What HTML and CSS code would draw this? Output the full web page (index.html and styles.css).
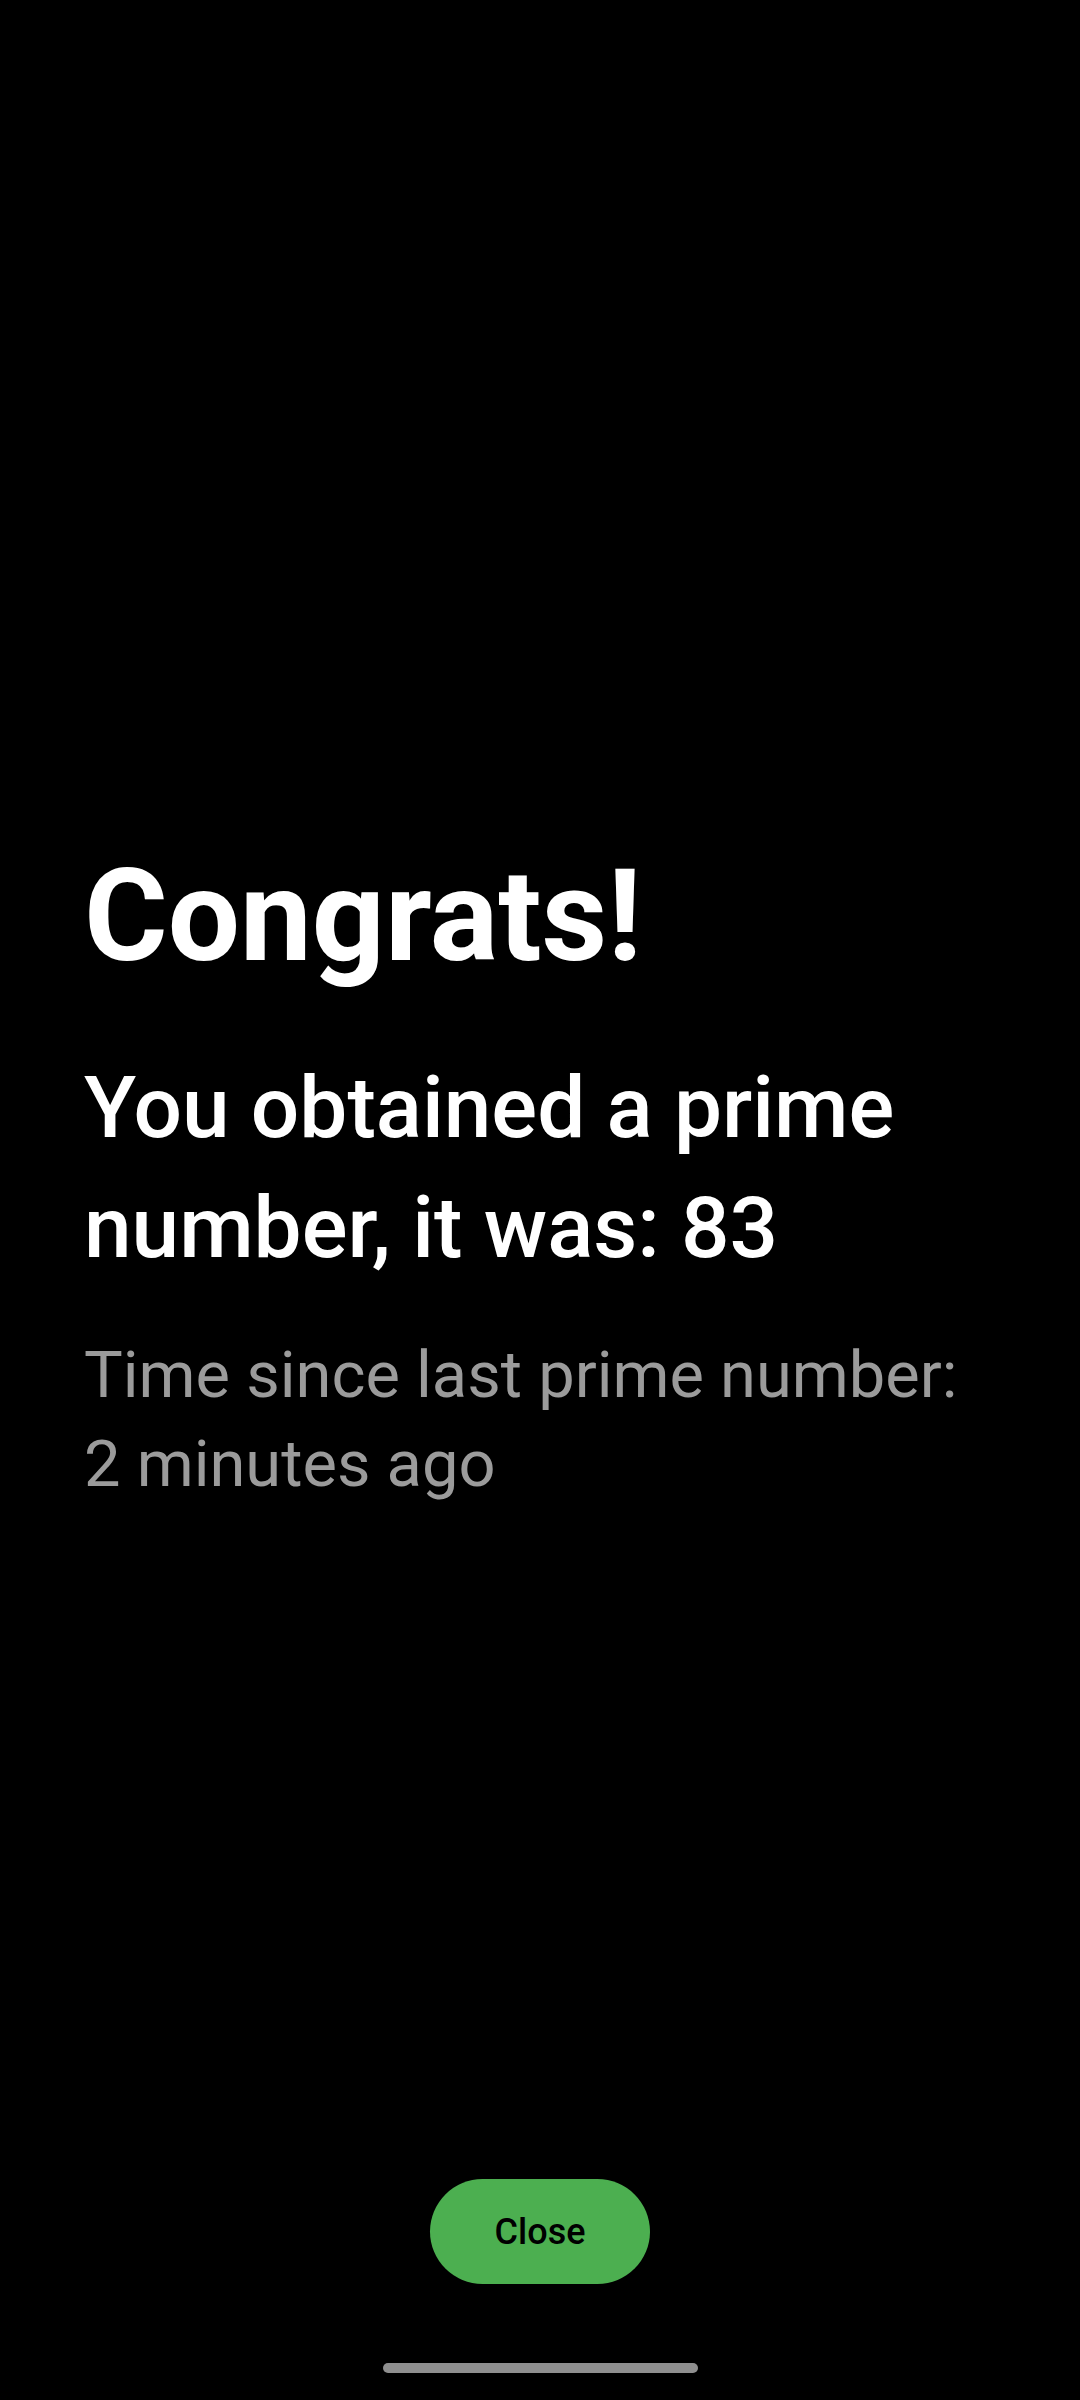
FILE: index.html
```html
<!DOCTYPE html>
<html lang="en">
<head>
<meta charset="utf-8">
<title>Congrats</title>
<link rel="stylesheet" href="styles.css">
</head>
<body>
<div class="screen">
  <main class="content">
    <h1 class="title">Congrats!</h1>
    <p class="subtitle">You obtained a prime number, it was: 83</p>
    <p class="since">Time since last prime number: 2 minutes ago</p>
  </main>
  <footer class="footer">
    <button class="close-btn" type="button">Close</button>
    <div class="home-bar"></div>
  </footer>
</div>
</body>
</html>
```
FILE: styles.css
```css
html, body {
  margin: 0;
  padding: 0;
  background: #000;
}
.screen {
  width: 1080px;
  height: 2400px;
  display: flex;
  flex-direction: column;
  font-family: Roboto, "Liberation Sans", sans-serif;
  color: #fff;
  box-sizing: border-box;
  padding-bottom: 27px;
}
.content {
  padding: 842px 84px 0 84px;
  display: flex;
  flex-direction: column;
}
.title {
  margin: 0;
  font-size: 128px;
  line-height: 148px;
  font-weight: 700;
}
.subtitle {
  margin: 58px 0 0 0;
  font-size: 85.5px;
  line-height: 120px;
  font-weight: 500;
}
.since {
  margin: 43px 0 0 0;
  font-size: 65px;
  line-height: 89px;
  font-weight: 400;
  color: #9b9b9b;
}
.footer {
  margin-top: auto;
  display: flex;
  flex-direction: column;
  align-items: center;
}
.close-btn {
  width: 220px;
  height: 105px;
  border: none;
  border-radius: 53px;
  background: #4caf50;
  color: #000;
  font-family: Roboto, "Liberation Sans", sans-serif;
  font-size: 36px;
  font-weight: 500;
  padding: 0;
}
.home-bar {
  margin-top: 79px;
  width: 315px;
  height: 10px;
  border-radius: 5px;
  background: #8f8f8f;
}
```
